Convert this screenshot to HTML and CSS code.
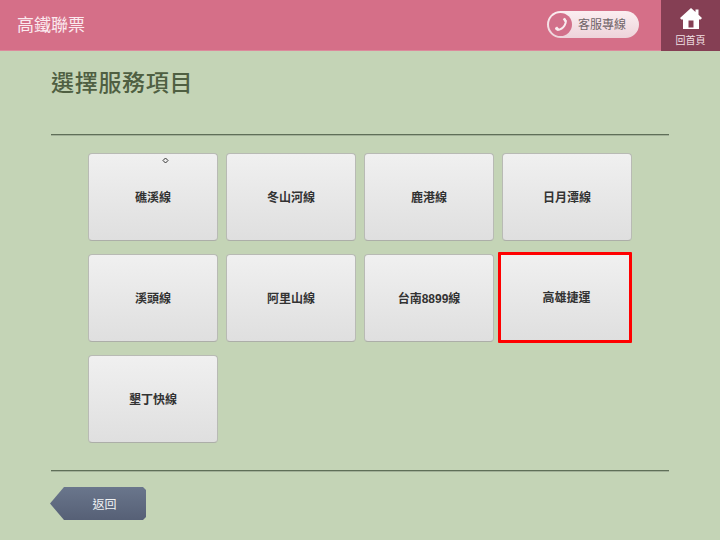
FILE: index.html
```html
<!DOCTYPE html>
<html lang="zh-Hant">
<head>
<meta charset="utf-8">
<title>高鐵聯票</title>
<link rel="stylesheet" href="styles.css">
</head>
<body>
<header class="topbar">
  <div class="brand">高鐵聯票</div>
  <div class="hotline">
    <span class="hotline-icon">
      <svg viewBox="0 0 20 20" width="18" height="18"><path fill="none" stroke="#f9ecef" stroke-width="2.200" stroke-linecap="round" d="M14.200 3.800c1.300 1.200 1.500 2.200 1 3.600-1 3.400-3.800 6.600-7 7.800-1.500.5-2.600.2-3.700-1"/><path fill="#f9ecef" d="M12 3.200l2.300-1.200 2 3.200-2.300 1.500zM3.300 13.300l2.300-1.500 2.700 2.900-2.200 1.700z"/></svg>
    </span>
    <span class="hotline-text">客服專線</span>
  </div>
  <a class="home">
    <svg viewBox="0 0 22 22" width="22" height="22"><path fill="#fff" fill-rule="evenodd" d="M11 0l4.500 4V1.500h3v5.200L22 10l-1.300 1.600H19V21H3v-9.400H1.300L0 10zM8.500 12.500V19.500h5v-7z"/></svg>
    <span class="home-label">回首頁</span>
  </a>
</header>
<main class="content">
  <h1 class="title">選擇服務項目</h1>
  <div class="grid">
    <button class="card">
      <svg class="sparkle" viewBox="0 0 7 7" width="7" height="7"><path fill="none" stroke="#333" d="M3.500 1L6 3.500 3.500 6 1 3.500z"/></svg>
      礁溪線
    </button>
    <button class="card">冬山河線</button>
    <button class="card">鹿港線</button>
    <button class="card">日月潭線</button>
    <button class="card">溪頭線</button>
    <button class="card">阿里山線</button>
    <button class="card">台南8899線</button>
    <button class="card card-selected">高雄捷運</button>
    <button class="card">墾丁快線</button>
  </div>
  <footer class="footer">
    <a class="back">返回</a>
  </footer>
</main>
</body>
</html>
```

FILE: styles.css
```css
* { box-sizing: border-box; }
html, body { margin: 0; padding: 0; }
body {
  width: 720px;
  height: 540px;
  overflow: hidden;
  background: #c4d4b6;
  font-family: "Liberation Sans", "Noto Sans CJK TC", sans-serif;
}
.topbar {
  height: 51px;
  display: flex;
  align-items: center;
  background: #d56f88;
  padding-left: 17px;
  border-bottom: 1px solid #dc8a9c;
}
.brand {
  flex: 1;
  color: #fbe9ee;
  font-size: 17px;
  line-height: 20px;
  margin-top: 2px;
}
.hotline {
  width: 92px;
  height: 27px;
  margin: -1px 22px 0 0;
  display: flex;
  align-items: center;
  gap: 6px;
  padding-left: 2px;
  border-radius: 14px;
  background: linear-gradient(#fbeef1, #eed3da);
}
.hotline-icon {
  width: 23px;
  height: 23px;
  border-radius: 50%;
  background: #d2708a;
  display: flex;
  align-items: center;
  justify-content: center;
}
.hotline-text { color: #6f6468; font-size: 12px; line-height: 16px; }
.home {
  width: 59px;
  height: 51px;
  margin-bottom: -1px;
  background: #853f54;
  display: flex;
  flex-direction: column;
  align-items: center;
  padding-top: 8px;
}
.home-label { color: #f0dfe3; font-size: 10px; line-height: 12px; margin-top: 5px; }
.content { padding: 0 51px; }
.title {
  margin: 0;
  height: 84px;
  padding-top: 18px;
  border-bottom: 1px solid #5f6f58;
  box-shadow: 0 1px 0 #a3b199;
  color: #4f5f42;
  font-size: 23px;
  line-height: 28px;
  font-weight: 500;
  letter-spacing: 0.7px;
}
.grid {
  display: grid;
  grid-template-columns: repeat(4, 130px);
  grid-auto-rows: 88px;
  column-gap: 8px;
  row-gap: 13px;
  padding: 18px 0 27px 37px;
}
.card {
  position: relative;
  padding: 0 0 2px;
  border: 1px solid #b8bab4;
  border-bottom-color: #acaea8;
  border-radius: 4px;
  background: linear-gradient(#f0f0f0, #dfdfdf);
  color: #333;
  font-family: inherit;
  font-size: 12px;
  font-weight: 700;
}
.card-selected {
  margin: -2px 0 -1px -4px;
  padding-left: 3px;
  border: 3px solid #f00;
  border-radius: 1px;
}
.sparkle { position: absolute; left: 73px; top: 3px; }
.footer {
  border-top: 1px solid #5f6f58;
  box-shadow: inset 0 1px 0 #a3b199;
  padding-top: 16px;
}
.back {
  display: flex;
  align-items: center;
  justify-content: center;
  width: 96px;
  height: 33px;
  margin-left: -1px;
  padding: 0 0 1px 13px;
  color: #f0f2f4;
  font-size: 12px;
  background: linear-gradient(#6a768c, #566076);
  clip-path: polygon(14px 0, 93px 0, 96px 3px, 96px 30px, 93px 33px, 14px 33px, 0 16.500px);
}
```
